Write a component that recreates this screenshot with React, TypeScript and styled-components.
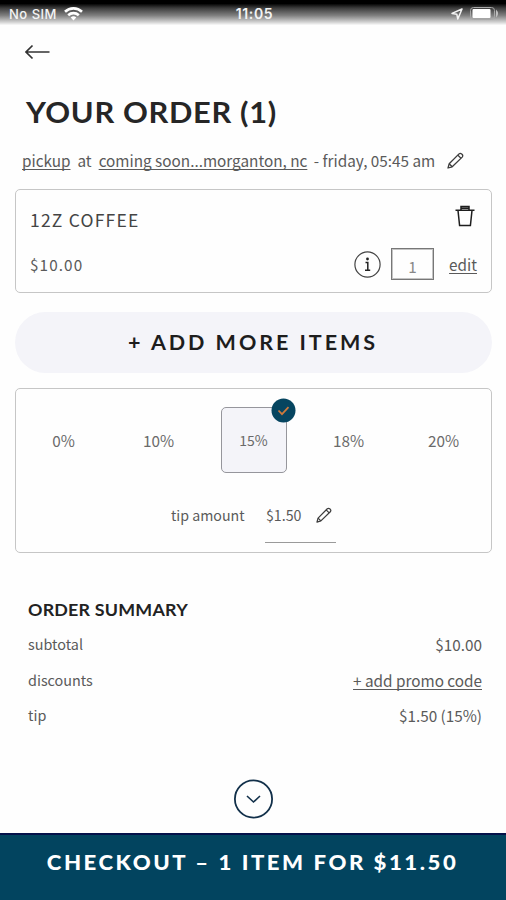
import React from "react";
import styled, { createGlobalStyle } from "styled-components";

const GlobalStyle = createGlobalStyle`
  * { box-sizing: border-box; }
  body { margin: 0; background: #fefefe; }
  button { font: inherit; color: inherit; border: 0; padding: 0; background: none; }
`;

const bodyFont = `"Noto Sans CJK SC", "Noto Sans", sans-serif`;
const headFont = `Lato, "Liberation Sans", sans-serif`;

const Screen = styled.div`
  width: 506px;
  height: 900px;
  display: flex;
  flex-direction: column;
  overflow: hidden;
  background: #fefefe;
  color: #5a5a5a;
  font-family: ${bodyFont};
  font-size: 15.3px;
  line-height: 20px;
`;

const StatusBar = styled.div`
  height: 25px;
  flex: none;
  display: grid;
  grid-template-columns: 1fr auto 1fr;
  align-items: center;
  padding: 2px 6px 0 9px;
  color: #f4f4f4;
  font: 500 13px/20px Inter, "Liberation Sans", sans-serif;
  background: linear-gradient(#000 0, #000 14%, #3c3c3c 32%, #808080 62%, #d0d0d0 88%, #fafafa 100%);
`;

const StatusGroup = styled.div<{ $end?: boolean }>`
  display: flex;
  align-items: center;
  gap: 7px;
  letter-spacing: 0.5px;
  justify-content: ${(p) => (p.$end ? "flex-end" : "flex-start")};
`;

const Clock = styled.div`
  font-weight: 600;
  font-size: 14px;
  letter-spacing: 0.6px;
`;

const Header = styled.header`
  flex: none;
  height: 164px;
  padding: 19px 0 0 22px;
`;

const BackButton = styled.button`
  display: block;
  height: 16px;
  margin-left: 3px;
  svg { display: block; }
`;

const Title = styled.h1`
  margin: 36px 0 0 4px;
  font: 700 28px/32px ${headFont};
  letter-spacing: 0.6px;
  color: #262626;
  white-space: nowrap;
  transform: scaleX(1.1);
  transform-origin: left;
`;

const PickupLine = styled.div`
  display: flex;
  align-items: center;
  margin-top: 21px;
  height: 22px;
  white-space: nowrap;
`;

const Link = styled.span`
  text-decoration: underline;
  text-decoration-thickness: 1px;
  text-underline-offset: 2px;
  text-decoration-skip-ink: none;
`;

const Plain = styled.span<{ $left?: number }>`
  margin-left: ${(p) => p.$left ?? 0}px;
  svg { display: block; }
`;

const Card = styled.section<{ $height: number }>`
  flex: none;
  height: ${(p) => p.$height}px;
  margin: 0 14px 0 15px;
  border: 1.5px solid #c6c6c6;
  border-radius: 5px;
`;

const ItemCard = styled(Card)`
  display: flex;
  flex-direction: column;
  justify-content: space-between;
  padding: 12px 14px 11px;
`;

const ItemRow = styled.div`
  display: flex;
  align-items: center;
  justify-content: space-between;
  height: 34px;
`;

const ItemName = styled.div`
  padding-top: 1px;
  font-size: 17.5px;
  letter-spacing: 1.2px;
  color: #444;
`;

const TrashButton = styled.button`
  height: 22px;
  margin: 0 2px 7px 0;
  svg { display: block; }
`;

const ItemPrice = styled.div`
  letter-spacing: 1.1px;
`;

const ItemTools = styled.div`
  display: flex;
  align-items: center;
`;

const Quantity = styled.div`
  width: 43px;
  height: 32px;
  margin: 0 15px 0 10px;
  padding-top: 2px;
  border: 1px solid #777;
  box-shadow: inset 0 0 0 1px #c4c4c4;
  text-align: center;
  line-height: 30px;
  color: #888;
`;

const AddMore = styled.button`
  flex: none;
  height: 61px;
  margin: 19px 14px 15px 15px;
  border-radius: 31px;
  background: #f4f4f9;
  color: #1d1d1d;
  font: 700 20.5px/59px ${headFont};
  letter-spacing: 2.8px;
  white-space: nowrap;
`;

const Wide = styled.span<{ $scale: number }>`
  display: inline-block;
  transform: scaleX(${(p) => p.$scale});
`;

const TipOptions = styled.div`
  display: grid;
  grid-template-columns: repeat(5, 1fr);
  justify-items: center;
  padding-top: 17.5px;
`;

const TipOption = styled.div<{ $selected?: boolean }>`
  position: relative;
  width: 66px;
  height: 66px;
  display: grid;
  place-items: center;
  font-size: ${(p) => (p.$selected ? 14 : 15.3)}px;
  color: #6a6a6a;
  border: 1.5px solid ${(p) => (p.$selected ? "#96969c" : "transparent")};
  border-radius: 5px;
  background: ${(p) => (p.$selected ? "#f4f4f9" : "transparent")};
`;

const CheckBadge = styled.svg`
  position: absolute;
  top: -10px;
  right: -10.5px;
`;

const TipAmount = styled.div`
  display: flex;
  align-items: flex-start;
  margin: 28px 0 0 155px;
  font-size: 14.2px;
`;

const TipLabel = styled.div`
  width: 94px;
  padding-top: 4px;
`;

const TipField = styled.div`
  width: 71px;
  height: 42px;
  display: flex;
  justify-content: space-between;
  align-items: flex-start;
  padding: 4px 4px 0 1px;
  border-bottom: 1px solid #9a9a9a;
  svg { margin-top: 2px; }
`;

const Summary = styled.section`
  flex: none;
  padding: 47px 24px 0 28px;
`;

const SummaryTitle = styled.h2`
  margin: 0 0 14px;
  font: 700 17px/20px ${headFont};
  letter-spacing: 0.2px;
  color: #222;
  transform: scaleX(1.05);
  transform-origin: left;
`;

const SummaryRow = styled.div`
  display: flex;
  justify-content: space-between;
  height: 35.7px;
`;

const SummaryLabel = styled.span`
  font-size: 14.4px;
`;

const Expand = styled.button`
  flex: none;
  align-self: center;
  height: 40px;
  margin: auto 0 14px;
  svg { display: block; }
`;

const Checkout = styled.button`
  flex: none;
  height: 67px;
  padding-bottom: 12px;
  border-top: 2px solid #05124a;
  background: #02445f;
  color: #fff;
  font: 900 20.5px/52px ${headFont};
  letter-spacing: 2.35px;
  white-space: nowrap;
`;

const Wifi = () => (
  <svg width="19" height="14" viewBox="0 0 19 14" fill="none" stroke="#fff" strokeWidth="2.6">
    <path d="M1 4.8a12.2 12.2 0 0 1 17 0" />
    <path d="M4.2 8.2a7.7 7.7 0 0 1 10.6 0" />
    <path d="M9.5 13.4 6.7 10.6a4 4 0 0 1 5.6 0z" fill="#fff" stroke="none" />
  </svg>
);

const Location = () => (
  <svg width="12" height="12" viewBox="0 0 12 12" fill="none" stroke="#f4f4f4" strokeWidth="1.5" strokeLinejoin="round">
    <path d="M11 1 1 5.4l4.8.8L6.8 11z" />
  </svg>
);

const Battery = () => (
  <svg width="30" height="13" viewBox="0 0 30 13">
    <rect x=".5" y=".5" width="24" height="12" rx="3" fill="none" stroke="#a8a8a8" />
    <rect x="2.5" y="2" width="18" height="9" rx="1" fill="#fff" />
    <path d="M26 2.5v8q4-4 0-8z" fill="#c0c0c0" />
  </svg>
);

const Pencil = ({ size = 17 }: { size?: number }) => (
  <svg width={size} height={size} viewBox="0 0 17 17" fill="none" stroke="#3c3c3c" strokeWidth="1.3" strokeLinejoin="round">
    <path d="M1 16 2.2 11.8 12 1.9q1.3-1.1 2.6 0l.6.6q1.1 1.3 0 2.6L5.2 14.8z" />
    <path d="m10.8 3.1 3.2 3.2M2.2 11.8l3 3" />
  </svg>
);

const Trash = () => (
  <svg width="20" height="22" viewBox="0 0 20 22" fill="none" stroke="#1e1e1e" strokeWidth="1.5">
    <path d="M.5 5.3h19M6 5V1.5h8V5M6.5 3.3h7M3 5.5l1.6 15h10.8l1.6-15" />
  </svg>
);

const Info = () => (
  <svg width="27" height="27" viewBox="0 0 27 27">
    <circle cx="13.5" cy="13.5" r="12.6" fill="none" stroke="#444" strokeWidth="1.2" />
    <circle cx="13.5" cy="8" r="1.4" fill="#222" />
    <path d="M11.5 11.5h2.3V19M11 19.2h5.2" fill="none" stroke="#222" strokeWidth="1.5" />
  </svg>
);

const tips = ["0%", "10%", "15%", "18%", "20%"];

export default function App() {
  return (
    <Screen>
      <GlobalStyle />
      <StatusBar>
        <StatusGroup>
          <span>No SIM</span>
          <Wifi />
        </StatusGroup>
        <Clock>11:05</Clock>
        <StatusGroup $end>
          <Location />
          <Battery />
        </StatusGroup>
      </StatusBar>
      <Header>
        <BackButton aria-label="Back">
          <svg width="25" height="16" viewBox="0 0 25 16" fill="none" stroke="#333" strokeWidth="1.7">
            <path d="M1 8h23.5M7.5 1.5 1 8l6.5 6.5" />
          </svg>
        </BackButton>
        <Title>YOUR ORDER (1)</Title>
        <PickupLine>
          <Link>pickup</Link>
          <Plain $left={7}>at</Plain>
          <Plain $left={7}>
            <Link>coming soon...morganton, nc</Link>
          </Plain>
          <Plain $left={6.5}>- friday, 05:45 am</Plain>
          <Plain $left={12}>
            <Pencil />
          </Plain>
        </PickupLine>
      </Header>
      <ItemCard $height={104}>
        <ItemRow>
          <ItemName>12Z COFFEE</ItemName>
          <TrashButton aria-label="Remove">
            <Trash />
          </TrashButton>
        </ItemRow>
        <ItemRow>
          <ItemPrice>$10.00</ItemPrice>
          <ItemTools>
            <Info />
            <Quantity>1</Quantity>
            <Link>edit</Link>
          </ItemTools>
        </ItemRow>
      </ItemCard>
      <AddMore>
        <Wide $scale={1.05}>+ ADD MORE ITEMS</Wide>
      </AddMore>
      <Card $height={165}>
        <TipOptions>
          {tips.map((tip) => (
            <TipOption key={tip} $selected={tip === "15%"}>
              {tip}
              {tip === "15%" && (
                <CheckBadge width="25" height="25" viewBox="0 0 25 25">
                  <circle cx="12.5" cy="12.5" r="12" fill="#064560" />
                  <path d="m7.5 12.5 3.5 3.7 6.5-7" fill="none" stroke="#d07a3c" strokeWidth="1.7" />
                </CheckBadge>
              )}
            </TipOption>
          ))}
        </TipOptions>
        <TipAmount>
          <TipLabel>tip amount</TipLabel>
          <TipField>
            <span>$1.50</span>
            <Pencil size={16} />
          </TipField>
        </TipAmount>
      </Card>
      <Summary>
        <SummaryTitle>ORDER SUMMARY</SummaryTitle>
        <SummaryRow>
          <SummaryLabel>subtotal</SummaryLabel>
          <span>$10.00</span>
        </SummaryRow>
        <SummaryRow>
          <SummaryLabel>discounts</SummaryLabel>
          <Link>+ add promo code</Link>
        </SummaryRow>
        <SummaryRow>
          <SummaryLabel>tip</SummaryLabel>
          <span>$1.50 (15%)</span>
        </SummaryRow>
      </Summary>
      <Expand aria-label="Show more">
        <svg width="41" height="40" viewBox="0 0 41 40" fill="none" stroke="#12304a">
          <circle cx="20.5" cy="20" r="18.6" strokeWidth="1.8" />
          <path d="m14 17 6.5 6 6.5-6" strokeWidth="1.6" />
        </svg>
      </Expand>
      <Checkout>
        <Wide $scale={1.08}>CHECKOUT – 1 ITEM FOR $11.50</Wide>
      </Checkout>
    </Screen>
  );
}
